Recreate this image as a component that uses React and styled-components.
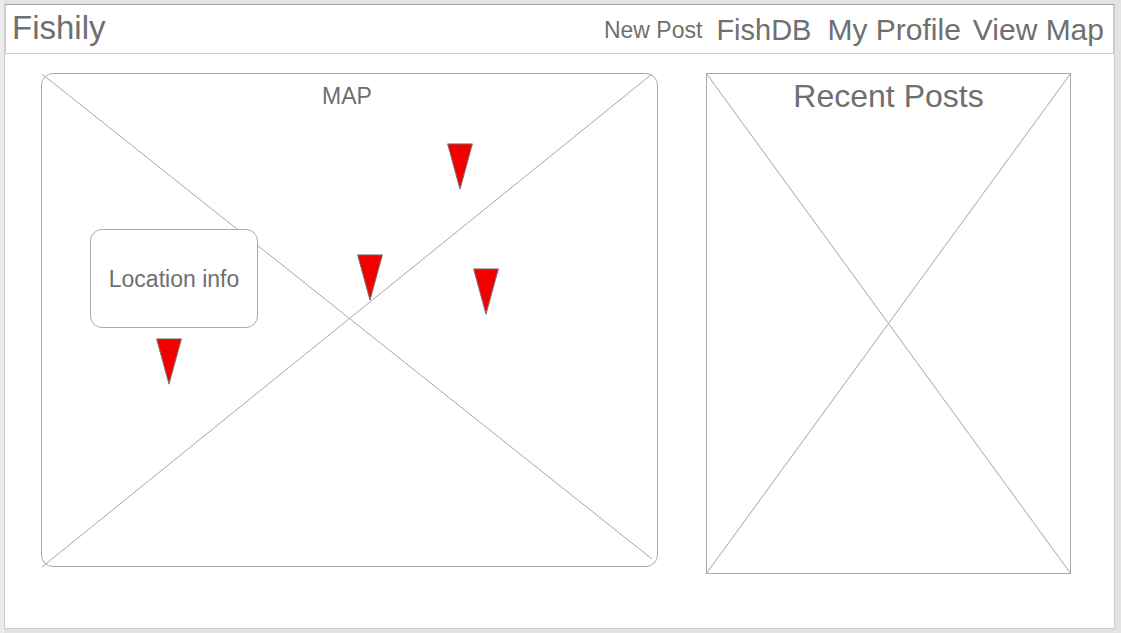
import React from "react";
import styled, { createGlobalStyle } from "styled-components";

const GlobalStyle = createGlobalStyle`
  *, *::before, *::after { box-sizing: border-box; }
  body {
    margin: 0;
    background: #e3e3e3;
    color: #6f6f6f;
    font-family: "Liberation Sans", Arial, sans-serif;
  }
`;

const Frame = styled.div`
  display: flex;
  min-height: 100vh;
  padding: 4px 6px 4px 0;
  background: linear-gradient(to right, #ebebeb 4px, #e3e3e3 4px);
`;

const Page = styled.div`
  flex: 1;
  min-width: 0;
  margin-left: 4px;
  background: #fff;
  border: 1px solid #cfcfcf;
  border-top: 0;
`;

const Header = styled.header`
  display: flex;
  align-items: center;
  justify-content: space-between;
  height: 50px;
  padding: 0 9px 0 6px;
  border: 1px solid #c8c8c8;
  border-top-color: #a4a4a4;
`;

const Brand = styled.a`
  padding-bottom: 2px;
  color: inherit;
  font-size: 33px;
  line-height: 36px;
  text-decoration: none;
`;

const Nav = styled.nav`
  display: flex;
  align-items: center;
  padding-top: 2px;
`;

const NavLink = styled.a`
  margin-left: ${({ $gap }) => $gap}px;
  color: inherit;
  font-size: ${({ $size }) => $size}px;
  line-height: 36px;
  text-decoration: none;
  white-space: nowrap;
`;

const Main = styled.main`
  display: grid;
  grid-template-columns: 617fr 365fr;
  align-items: start;
  gap: 48px;
  padding: 19px 43px 48px 36px;
`;

const Panel = styled.section`
  position: relative;
  aspect-ratio: ${({ $ratio }) => $ratio};
  border: 1px solid #a9a9a9;
  border-radius: ${({ $radius }) => $radius}px;
`;

const Crossing = styled.svg`
  position: absolute;
  inset: -1px;
  width: calc(100% + 2px);
  height: calc(100% + 2px);
  fill: none;
  stroke: #a6a6a6;
  overflow: visible;

  path { vector-effect: non-scaling-stroke; }
`;

const PanelTitle = styled.h2`
  position: relative;
  margin: 0;
  padding: 4px;
  font-size: ${({ $size }) => $size}px;
  font-weight: 400;
  line-height: 36px;
  text-align: center;
`;

const MapTitle = styled(PanelTitle)`
  padding-right: 9px;
`;

const PinButton = styled.button`
  position: absolute;
  left: ${({ $x }) => $x}px;
  top: ${({ $y }) => $y}px;
  width: 26px;
  height: 47px;
  padding: 0;
  border: 0;
  background: none;
  cursor: pointer;

  svg { display: block; }
`;

const InfoCard = styled.div`
  position: absolute;
  left: 48px;
  top: 155px;
  display: grid;
  place-items: center;
  width: 168px;
  height: 99px;
  background: #fff;
  border: 1px solid #a9a9a9;
  border-radius: 12px;
  font-size: 23px;
  line-height: 36px;
  white-space: nowrap;
`;

const links = [
  { label: "New Post", href: "#new-post", size: 23, gap: 0 },
  { label: "FishDB", href: "#fishdb", size: 29, gap: 14 },
  { label: "My Profile", href: "#profile", size: 30, gap: 16 },
  { label: "View Map", href: "#map", size: 30, gap: 12 },
];

const pins = [
  { x: 405, y: 69 },
  { x: 315, y: 180 },
  { x: 431, y: 194 },
  { x: 114, y: 264 },
];

function Pin({ x, y, label }) {
  return (
    <PinButton type="button" $x={x} $y={y} aria-label={label}>
      <svg width="26" height="47" viewBox="0 0 26 47" aria-hidden="true">
        <path d="M.6 .9H25.4L13 46.2Z" fill="#f20000" stroke="#777" strokeWidth="1" />
      </svg>
    </PinButton>
  );
}

export default function App() {
  return (
    <>
      <GlobalStyle />
      <Frame>
        <Page>
          <Header>
            <Brand href="#home">Fishily</Brand>
            <Nav>
              {links.map((link) => (
                <NavLink key={link.href} href={link.href} $size={link.size} $gap={link.gap}>
                  {link.label}
                </NavLink>
              ))}
            </Nav>
          </Header>
          <Main>
            <Panel id="map" $ratio="617 / 494" $radius={12}>
              <Crossing viewBox="0 0 617 494" preserveAspectRatio="none" aria-hidden="true">
                <path d="M1 1L611 486M1 494L611 1" />
              </Crossing>
              <MapTitle $size={23}>MAP</MapTitle>
              <InfoCard>Location info</InfoCard>
              {pins.map((pin, i) => (
                <Pin key={i} x={pin.x} y={pin.y} label={`Location ${i + 1}`} />
              ))}
            </Panel>
            <Panel $ratio="365 / 501" $radius={0}>
              <Crossing viewBox="0 0 365 501" preserveAspectRatio="none" aria-hidden="true">
                <path d="M0 0L365 501M365 0L0 501" />
              </Crossing>
              <PanelTitle $size={32}>Recent Posts</PanelTitle>
            </Panel>
          </Main>
        </Page>
      </Frame>
    </>
  );
}
